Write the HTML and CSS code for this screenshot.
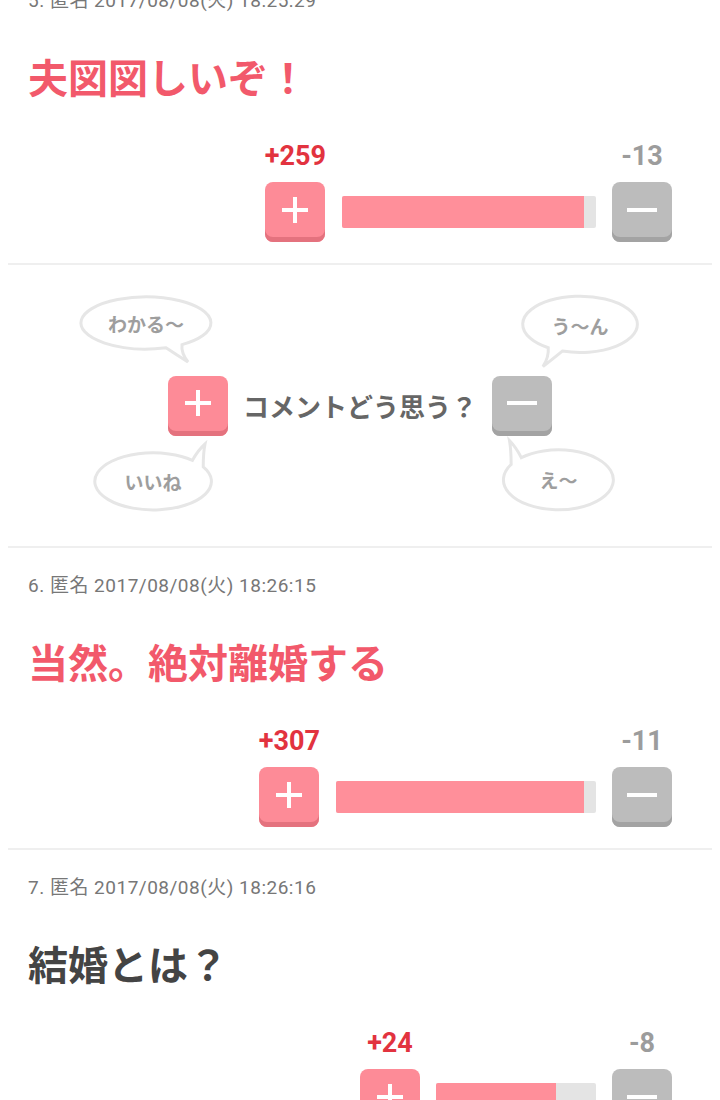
FILE: index.html
```html
<!DOCTYPE html>
<html lang="ja">

<head>
    <meta charset="UTF-8">
    <meta name="viewport" content="width=device-width, initial-scale=1.0">
    <title>コメント</title>
    <link rel="stylesheet" href="styles.css">
</head>

<body>
    <div class="thread">
        <div class="comment">
            <div class="comment-head">5. 匿名 2017/08/08(火) 18:25:29</div>
            <div class="comment-body hot">夫図図しいぞ！</div>
            <div class="vote">
                <div class="vote-side">
                    <span class="count count-plus">+259</span>
                    <div class="btn btn-plus">
                        <svg width="28" height="28" viewBox="0 0 28 28"><path d="M14 1v26M1 14h26" stroke="#fff" stroke-width="4" /></svg>
                    </div>
                </div>
                <div class="bar" style="width:254px"><div class="bar-fill" style="width:95.2%"></div></div>
                <div class="vote-side">
                    <span class="count count-minus">-13</span>
                    <div class="btn btn-minus">
                        <svg width="30" height="28" viewBox="0 0 30 28"><path d="M0 14h30" stroke="#fff" stroke-width="4" /></svg>
                    </div>
                </div>
            </div>
        </div>

        <div class="prompt">
            <div class="bubble bubble-top b-wakaru">
                <svg viewBox="0 0 136 72" preserveAspectRatio="none"><path d="M104 49.6A65 26 0 1 0 88 52.7Q99 60 110 67Q103 58 104 49.6Z" /></svg>
                <span>わかる〜</span>
            </div>
            <div class="bubble bubble-top bubble-flip b-un">
                <svg viewBox="0 0 136 72" preserveAspectRatio="none"><path d="M104 49.6A65 26 0 1 0 88 52.7Q99 60 110 67Q103 58 104 49.6Z" /></svg>
                <span>う〜ん</span>
            </div>
            <div class="bubble bubble-bottom b-iine">
                <svg viewBox="0 0 136 72" preserveAspectRatio="none"><path d="M112 24.9A65 26 0 1 0 124 30.8Q124 18 126 10Q118 16 112 24.9Z" /></svg>
                <span>いいね</span>
            </div>
            <div class="bubble bubble-bottom bubble-flip b-ee">
                <svg viewBox="0 0 136 72" preserveAspectRatio="none"><path d="M112 24.9A65 26 0 1 0 124 30.8Q124 18 126 10Q118 16 112 24.9Z" /></svg>
                <span>え〜</span>
            </div>

            <div class="btn btn-plus">
                <svg width="28" height="28" viewBox="0 0 28 28"><path d="M14 1v26M1 14h26" stroke="#fff" stroke-width="4" /></svg>
            </div>
            <span class="prompt-text">コメントどう思う？</span>
            <div class="btn btn-minus">
                <svg width="30" height="28" viewBox="0 0 30 28"><path d="M0 14h30" stroke="#fff" stroke-width="4" /></svg>
            </div>
        </div>

        <div class="comment">
            <div class="comment-head">6. 匿名 2017/08/08(火) 18:26:15</div>
            <div class="comment-body hot">当然。絶対離婚する</div>
            <div class="vote">
                <div class="vote-side">
                    <span class="count count-plus">+307</span>
                    <div class="btn btn-plus">
                        <svg width="28" height="28" viewBox="0 0 28 28"><path d="M14 1v26M1 14h26" stroke="#fff" stroke-width="4" /></svg>
                    </div>
                </div>
                <div class="bar" style="width:260px"><div class="bar-fill" style="width:95.4%"></div></div>
                <div class="vote-side">
                    <span class="count count-minus">-11</span>
                    <div class="btn btn-minus">
                        <svg width="30" height="28" viewBox="0 0 30 28"><path d="M0 14h30" stroke="#fff" stroke-width="4" /></svg>
                    </div>
                </div>
            </div>
        </div>

        <div class="comment">
            <div class="comment-head">7. 匿名 2017/08/08(火) 18:26:16</div>
            <div class="comment-body">結婚とは？</div>
            <div class="vote">
                <div class="vote-side">
                    <span class="count count-plus">+24</span>
                    <div class="btn btn-plus">
                        <svg width="28" height="28" viewBox="0 0 28 28"><path d="M14 1v26M1 14h26" stroke="#fff" stroke-width="4" /></svg>
                    </div>
                </div>
                <div class="bar" style="width:160px"><div class="bar-fill" style="width:75%"></div></div>
                <div class="vote-side">
                    <span class="count count-minus">-8</span>
                    <div class="btn btn-minus">
                        <svg width="30" height="28" viewBox="0 0 30 28"><path d="M0 14h30" stroke="#fff" stroke-width="4" /></svg>
                    </div>
                </div>
            </div>
        </div>
    </div>
</body>

</html>
```

FILE: styles.css
```css
body {
    margin: 0;
    background: #fff;
    font-family: Roboto, "Noto Sans CJK JP", sans-serif;
    color: #444;
}

.thread {
    margin-top: -37px;
}

.comment {
    margin: 0 8px;
    padding: 27px 40px 21px 20px;
    border-bottom: 2px solid #efefef;
}

.comment-head {
    font-size: 19px;
    line-height: 22px;
    letter-spacing: 0.5px;
    color: #777;
}

.comment-body {
    margin-top: 40px;
    font-family: "Noto Sans CJK JP", sans-serif;
    font-weight: 700;
    font-size: 40px;
    line-height: 48px;
    color: #444;
}

.comment-body.hot {
    color: #f2596b;
}

.vote {
    margin-top: 42px;
    display: flex;
    justify-content: flex-end;
    align-items: flex-end;
}

.vote-side {
    display: flex;
    flex-direction: column;
    align-items: center;
}

.count {
    font-family: Roboto, sans-serif;
    font-weight: 700;
    font-size: 27px;
    line-height: 28px;
    margin-bottom: 12px;
}

.count-plus {
    color: #e2333f;
}

.count-minus {
    color: #9c9c9c;
}

.btn {
    width: 60px;
    height: 60px;
    box-sizing: border-box;
    padding-bottom: 5px;
    border-radius: 8px;
    display: flex;
    align-items: center;
    justify-content: center;
}

.btn-plus {
    background: #fd8b97;
    box-shadow: inset 0 -5px 0 #e4727e;
}

.btn-minus {
    background: #bcbcbc;
    box-shadow: inset 0 -5px 0 #a3a3a3;
}

.bar {
    height: 32px;
    margin: 0 16px 14px;
    background: #e4e4e4;
    border-radius: 2px;
    overflow: hidden;
}

.bar-fill {
    height: 100%;
    background: #ff8f9a;
}

/* comment prompt with speech bubbles */
.prompt {
    position: relative;
    margin: 0 8px;
    height: 281px;
    border-bottom: 2px solid #efefef;
    display: flex;
    align-items: center;
    justify-content: center;
    gap: 15px;
}

.prompt-text {
    font-family: "Noto Sans CJK JP", sans-serif;
    font-weight: 700;
    font-size: 26px;
    color: #666;
}

.bubble {
    position: absolute;
    display: flex;
    align-items: center;
    justify-content: center;
    box-sizing: border-box;
}

.bubble svg {
    position: absolute;
    left: 0;
    top: 0;
    width: 100%;
    height: 100%;
    overflow: visible;
}

.bubble path {
    fill: #fff;
    stroke: #e6e6e6;
    stroke-width: 3;
    vector-effect: non-scaling-stroke;
}

.bubble-flip svg {
    transform: scaleX(-1);
}

.bubble span {
    position: relative;
    font-family: "Noto Sans CJK JP", sans-serif;
    font-weight: 700;
    font-size: 19px;
    color: #9e9e9e;
}

.bubble-top {
    padding-bottom: 16px;
}

.bubble-bottom {
    padding-top: 18px;
}

.b-wakaru {
    left: 70px;
    top: 30px;
    width: 136px;
    height: 72px;
}

.b-un {
    left: 512px;
    top: 29px;
    width: 120px;
    height: 78px;
}

.b-iine {
    left: 84px;
    top: 168px;
    width: 122px;
    height: 79px;
}

.b-ee {
    left: 493px;
    top: 164px;
    width: 115px;
    height: 83px;
}
```
